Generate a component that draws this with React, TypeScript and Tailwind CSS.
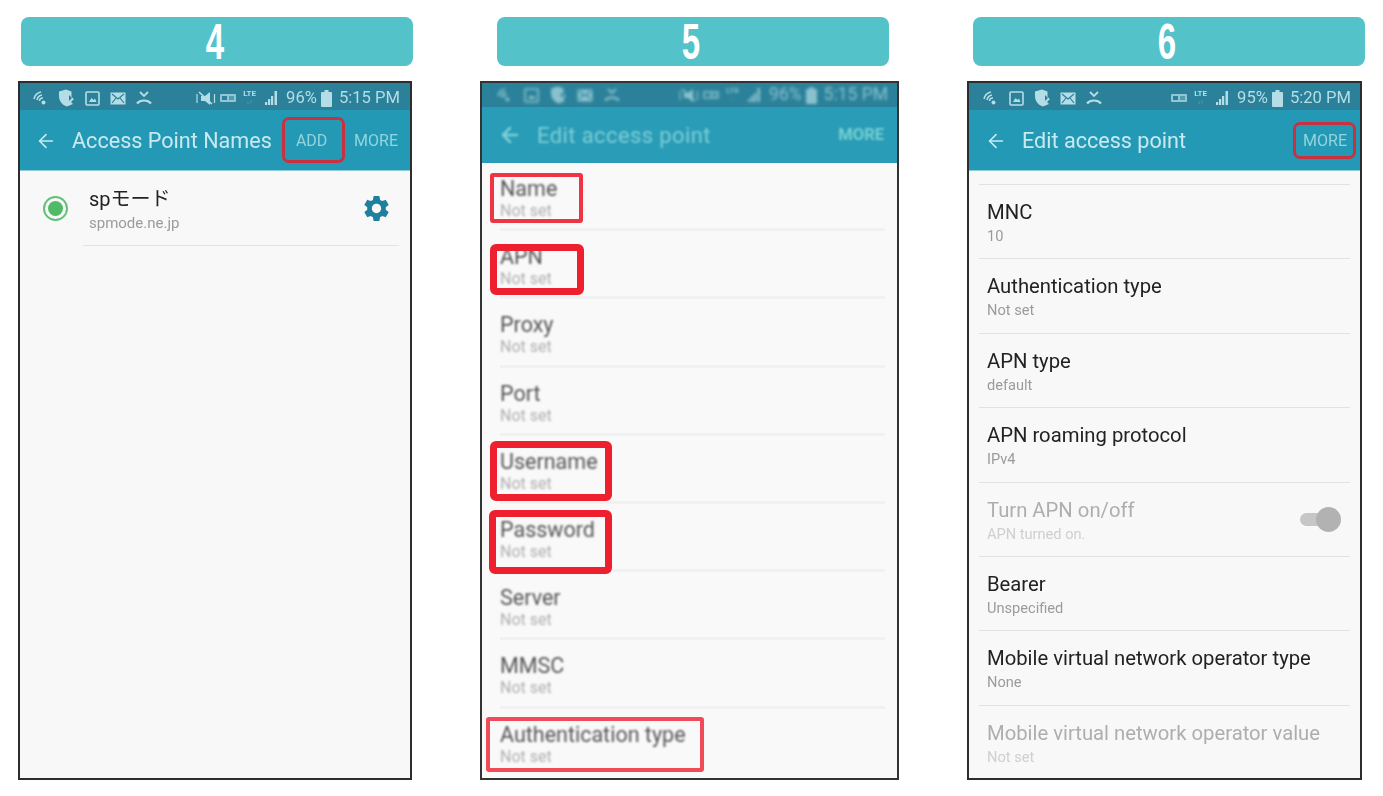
import React from "react";
import { ArrowLeft } from "lucide-react";
import { MdSettings } from "react-icons/md";

const C = "#b5dde6";

const Wifi = () => (
  <svg width="16" height="16" viewBox="0 0 16 16" fill="none" stroke={C} strokeWidth="1.6">
    <path d="M2 9 A9 9 0 0 1 9 2" />
    <path d="M5 10 A6 6 0 0 1 10 5" />
    <path d="M7.5 11 A3 3 0 0 1 11 8" />
    <circle cx="11.5" cy="12.5" r="2" fill={C} stroke="none" />
  </svg>
);
const Shield = () => (
  <svg width="16" height="18" viewBox="0 0 16 18">
    <path d="M1 2.5 L8 0.5 L13.5 2.5 V8 L16 10 L13 13 L15 15 L9 17.5 C4 16 1 12 1 7 Z" fill={C} />
    <path d="M11 6 L14 9 L11 12 Z" fill="#2a8199" />
  </svg>
);
const Img = () => (
  <svg width="15" height="15" viewBox="0 0 15 15" fill="none">
    <rect x="1" y="1" width="13" height="13" rx="1" stroke={C} strokeWidth="1.6" />
    <path d="M4 11 L6.5 7 L8.5 9 L10 7.5 L11.5 11 Z" fill={C} />
  </svg>
);
const Mail = () => (
  <svg width="16" height="13" viewBox="0 0 16 13" fill="none">
    <rect x="0.5" y="0.5" width="15" height="12" fill={C} />
    <path d="M2 2 L8 7 L14 2 M2 11 L6 6 M14 11 L10 6" stroke="#2a8199" strokeWidth="1.2" />
  </svg>
);
const Missed = () => (
  <svg width="16" height="14" viewBox="0 0 16 14" fill="none" stroke={C} strokeWidth="1.8">
    <path d="M1 12.5 C4 8.5 12 8.5 15 12.5" strokeWidth="2.2" />
    <path d="M4 1 L8 5 L12 1" />
  </svg>
);
const Mute = () => (
  <svg width="20" height="15" viewBox="0 0 20 15" fill="none" className="mr-[4px]">
    <path d="M5 5 H9 L14 1 V14 L9 10 H5 Z" fill={C} />
    <path d="M3 1 L16 13" stroke={C} strokeWidth="1.6" />
    <path d="M1 3 V12 M18.5 3 V12" stroke={C} strokeWidth="1.2" />
  </svg>
);
const Sim = () => (
  <svg width="16" height="8" viewBox="0 0 16 8" className="mr-[7px]">
    <rect width="16" height="8" rx="1" fill={C} opacity="0.75" />
    <rect x="2" y="2" width="5" height="4" fill="#2a8199" />
    <rect x="9" y="2" width="5" height="4" fill="#2a8199" opacity="0.6" />
  </svg>
);
const Lte = () => (
  <span className="flex flex-col items-center w-[13px] mr-[9px] mb-[2px] text-[8px] leading-[8px] font-bold text-[#b5dde6]">
    LTE
    <span className="font-normal opacity-50 text-[6px] leading-[7px]">↓↑</span>
  </span>
);
const Signal = () => (
  <svg width="12" height="14" viewBox="0 0 12 14" fill={C} className="mr-[9px]">
    <rect x="0" y="11" width="2.2" height="3" />
    <rect x="3" y="8" width="2.2" height="6" />
    <rect x="6" y="5" width="2.2" height="9" />
    <rect x="9.5" y="0" width="2.5" height="14" />
  </svg>
);
const Battery = () => (
  <svg width="11" height="17" viewBox="0 0 11 17" fill={C} className="mr-[7px]">
    <rect x="3.5" y="0" width="4" height="2" />
    <rect x="0" y="2" width="11" height="15" rx="1" />
  </svg>
);

type StatusProps = {
  left: React.ReactNode[];
  pct: string;
  time: string;
  mute?: boolean;
  cls: string;
  leftCls: string;
  textCls: string;
  blurCls: string;
  rightCls: string;
};

const Status = ({ left, pct, time, mute, cls, leftCls, textCls, blurCls, rightCls }: StatusProps) => (
  <div className={`flex items-center justify-between bg-[#2a8199] shrink-0 ${cls}`}>
    <div className={`flex items-center ${leftCls} ${blurCls}`}>
      {left.map((n, i) => (
        <span key={i} className="flex w-4 justify-center">
          {n}
        </span>
      ))}
    </div>
    <div className={`flex items-center ${blurCls} ${rightCls}`}>
      {mute && <Mute />}
      <Sim />
      <Lte />
      <Signal />
      <span className={`${textCls} mr-[4px]`}>{pct}</span>
      <Battery />
      <span className={textCls}>{time}</span>
    </div>
  </div>
);

const Header = ({ n, cls }: { n: string; cls: string }) => (
  <div className={`h-[49px] w-[392px] mb-[15px] rounded-[8px] bg-[#53c3c9] flex items-center justify-center pr-[4px] ${cls}`}>
    <span className="inline-block scale-x-[0.66] text-white font-['Liberation_Sans',sans-serif] font-bold text-[50px] leading-[49px] translate-y-[1px]">{n}</span>
  </div>
);

const RedBox = ({ cls }: { cls: string }) => <div className={`absolute border-[#ee2030] blur-[0.5px] ${cls}`} />;

const Row5 = ({ t, last }: { t: string; last?: boolean }) => (
  <div className={`h-[68.2px] shrink-0 ml-[18px] mr-[12px] ${last ? "" : "border-b-[3px] border-[#f1f1f1]"}`}>
    <div className="blur-[1px] pt-[12px]">
      <div className="text-[21.5px] leading-[27px] text-[#555]">{t}</div>
      <div className="text-[16px] leading-[18px] text-[#b0b0b0]">Not set</div>
    </div>
  </div>
);

const Row6 = ({ t, s, off, toggle }: { t: string; s: string; off?: boolean; toggle?: boolean }) => (
  <div className="h-[74.4px] shrink-0 border-t border-[#e2e2e2] mx-[10px] flex items-start justify-between">
    <div className="pt-[14px] pl-[8px] blur-[0.4px]">
      <div className={`text-[20.25px] leading-[27px] ${off ? "text-[#aeaeae]" : "text-[#222]"}`}>{t}</div>
      <div className={`text-[14.6px] leading-[18px] mt-[1px] ${off ? "text-[#cfcfcf]" : "text-[#9b9b9b]"}`}>{s}</div>
    </div>
    {toggle && (
      <div className="mt-[24px] mr-[9px] relative w-[41px] h-[25px] blur-[0.4px]">
        <div className="absolute left-0 right-[3px] top-[6px] h-[13px] rounded-full bg-[#c6c6c6]" />
        <div className="absolute right-0 top-0 w-[25px] h-[25px] rounded-full bg-[#b2b2b2]" />
      </div>
    )}
  </div>
);

export default function App() {
  return (
    <div className="w-[1383px] h-[796px] bg-white overflow-hidden flex pt-[17px] pl-[18px] font-['Roboto',sans-serif]">
      {/* 4 */}
      <div className="w-[394px] shrink-0 flex flex-col">
        <Header n="4" cls="ml-[3px]" />
        <div className="relative w-[394px] h-[699px] border-2 border-[#2d2d2d] bg-[#f8f8f8] flex flex-col">
          <Status
            cls="h-[27px] pt-[3px] pl-[12px] pr-[10px]"
            leftCls="gap-[10px]"
            rightCls=""
            blurCls="blur-[0.5px]"
            textCls="text-[#b5dde6] text-[16.6px] leading-none"
            left={[<Wifi />, <Shield />, <Img />, <Mail />, <Missed />]}
            pct="96%"
            time="5:15 PM"
            mute
          />
          <div className="h-[61px] shrink-0 bg-[#2499b6] border-b border-[#8fcbd8] flex items-center pt-[2px] pl-[15px] pr-[12px] text-[#c9e9ef]">
            <ArrowLeft size={22} strokeWidth={1.75} className="blur-[0.3px]" />
            <span className="ml-[15px] text-[21.6px] blur-[0.3px]">Access Point Names</span>
            <span className="ml-[24px] text-[16px] text-[#93d4dd] blur-[0.3px]">ADD</span>
            <span className="ml-auto text-[16px] text-[#93d4dd] blur-[0.3px]">MORE</span>
          </div>
          <div className="relative flex flex-col">
            <div className="flex items-start pl-[23px] pr-[18px] pt-[15px]">
              <div className="mt-[10px] w-[25px] h-[25px] rounded-full border-2 border-[#62c07a] flex items-center justify-center shrink-0">
                <div className="w-[15px] h-[15px] rounded-full bg-[#4fbb68]" />
              </div>
              <div className="ml-[21px] blur-[0.3px]">
                <div className="text-[20px] leading-[26px] text-[#222] font-['Roboto','Noto_Sans_CJK_JP',sans-serif]">spモード</div>
                <div className="text-[15px] leading-[18px] text-[#9b9b9b] mt-[2px]">spmode.ne.jp</div>
              </div>
              <MdSettings size={31} className="ml-auto mt-[7px] text-[#1f7f9e]" />
            </div>
            <div className="mt-[13px] ml-[63px] mr-[11px] h-[1px] bg-[#e2e3e6]" />
          </div>
          <div className="absolute left-[262px] top-[34px] w-[63px] h-[46px] rounded-[7px] border-[3px] border-[#c8313d]" />
        </div>
      </div>

      {/* 5 */}
      <div className="w-[419px] ml-[68px] shrink-0 flex flex-col">
        <Header n="5" cls="ml-[17px]" />
        <div className="relative w-[419px] h-[699px] border-2 border-[#333] bg-[#f9f9f9] flex flex-col">
          <Status
            cls="h-[24px] pl-[14px] pr-[9px]"
            leftCls="gap-[11px] opacity-70"
            rightCls="opacity-70"
            blurCls="blur-[1.6px]"
            textCls="text-[#b5dde6] text-[17.5px] leading-none"
            left={[<Wifi />, <Img />, <Shield />, <Mail />, <Missed />]}
            pct="96%"
            time="5:15 PM"
            mute
          />
          <div className="h-[56px] shrink-0 bg-[#299cb7] flex items-center pl-[16px] pr-[13px] text-[#7fcfd6]">
            <ArrowLeft size={24} strokeWidth={2.5} className="blur-[0.8px]" />
            <span className="ml-[15px] text-[22px] tracking-[0.4px] blur-[1.1px]">Edit access point</span>
            <span className="ml-auto text-[16.5px] font-bold text-[#77d0d2] blur-[1px]">MORE</span>
          </div>
          <div className="flex flex-col">
            {["Name", "APN", "Proxy", "Port", "Username", "Password", "Server", "MMSC"].map((t) => (
              <Row5 key={t} t={t} />
            ))}
            <Row5 t="Authentication type" last />
          </div>
          <RedBox cls="left-[8px] top-[90px] w-[93px] h-[50px] border-[4px] rounded-[3px] opacity-90" />
          <RedBox cls="left-[8px] top-[161px] w-[94px] h-[51px] border-[7px] rounded-[6px]" />
          <RedBox cls="left-[8px] top-[358px] w-[122px] h-[60px] border-[7px] rounded-[6px]" />
          <RedBox cls="left-[7px] top-[427px] w-[123px] h-[64px] border-[7px] rounded-[6px]" />
          <RedBox cls="left-[4px] top-[634px] w-[218px] h-[55px] border-[4px] rounded-[3px] opacity-80" />
        </div>
      </div>

      {/* 6 */}
      <div className="w-[395px] ml-[68px] shrink-0 flex flex-col">
        <Header n="6" cls="ml-[6px]" />
        <div className="relative w-[395px] h-[699px] border-2 border-[#2d2d2d] bg-[#f8f8f8] flex flex-col overflow-hidden">
          <Status
            cls="h-[27px] pt-[3px] pl-[13px] pr-[9px]"
            leftCls="gap-[10px]"
            rightCls=""
            blurCls="blur-[0.5px]"
            textCls="text-[#b5dde6] text-[16.6px] leading-none"
            left={[<Wifi />, <Img />, <Shield />, <Mail />, <Missed />]}
            pct="95%"
            time="5:20 PM"
          />
          <div className="h-[61px] shrink-0 bg-[#2499b6] border-b border-[#8fcbd8] flex items-center pt-[2px] pl-[16px] pr-[13px] text-[#c9e9ef]">
            <ArrowLeft size={22} strokeWidth={1.75} className="blur-[0.3px]" />
            <span className="ml-[15px] text-[21.6px] blur-[0.3px]">Edit access point</span>
            <span className="ml-auto text-[16px] text-[#93d4dd] blur-[0.3px]">MORE</span>
          </div>
          <div className="h-[13px] shrink-0" />
          <Row6 t="MNC" s="10" />
          <Row6 t="Authentication type" s="Not set" />
          <Row6 t="APN type" s="default" />
          <Row6 t="APN roaming protocol" s="IPv4" />
          <Row6 t="Turn APN on/off" s="APN turned on." off toggle />
          <Row6 t="Bearer" s="Unspecified" />
          <Row6 t="Mobile virtual network operator type" s="None" />
          <Row6 t="Mobile virtual network operator value" s="Not set" off />
          <div className="absolute left-[324px] top-[39px] w-[63px] h-[37px] rounded-[7px] border-[3px] border-[#c8313d]" />
        </div>
      </div>
    </div>
  );
}
